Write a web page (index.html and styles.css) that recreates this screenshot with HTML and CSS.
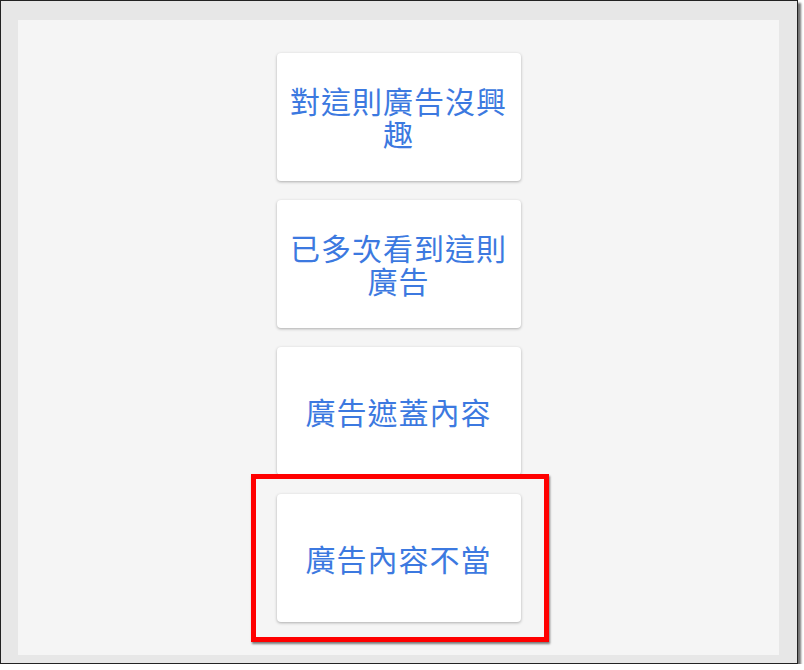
FILE: index.html
```html
<!DOCTYPE html>
<html lang="zh-Hant">
<head>
    <meta charset="UTF-8">
    <meta name="viewport" content="width=device-width, initial-scale=1.0">
    <title>廣告意見回饋</title>
    <link rel="stylesheet" href="styles.css">
</head>
<body>
    <div class="frame">
        <div class="panel">
            <div class="option">對這則廣告沒興趣</div>
            <div class="option">已多次看到這則廣告</div>
            <div class="option">廣告遮蓋內容</div>
            <div class="option marked">廣告內容不當</div>
        </div>
    </div>
</body>
</html>
```
FILE: styles.css
```css
body {
    margin: 0;
    background-color: #fff;
    font-family: "Noto Sans CJK TC", "Noto Sans", sans-serif;
}
.frame {
    width: 761px;
    height: 635px;
    padding: 19px 18px 8px 17px;
    background-color: #e7e7e7;
    border: 1px solid #222;
    box-shadow: 3px 3px 2px rgba(0, 0, 0, 0.55);
}
.panel {
    height: 100%;
    box-sizing: border-box;
    background-color: #f5f5f5;
    padding-top: 33px;
    display: flex;
    flex-direction: column;
    align-items: center;
    gap: 19px;
}
.option {
    width: 244px;
    height: 128px;
    box-sizing: border-box;
    padding: 0 8px;
    background-color: #fff;
    border-radius: 4px;
    box-shadow: 0 1px 3px rgba(0, 0, 0, 0.3);
    display: flex;
    align-items: center;
    justify-content: center;
    text-align: center;
    color: #3c79e0;
    font-size: 30px;
    letter-spacing: 1px;
    line-height: 33px;
    position: relative;
}
/* red highlight box drawn around the last option */
.marked::after {
    content: "";
    position: absolute;
    left: -26px;
    top: -20px;
    width: 288px;
    height: 158px;
    border: 5px solid #f00;
    box-shadow: 1px 2px 2px rgba(0, 0, 0, 0.5);
}
```
